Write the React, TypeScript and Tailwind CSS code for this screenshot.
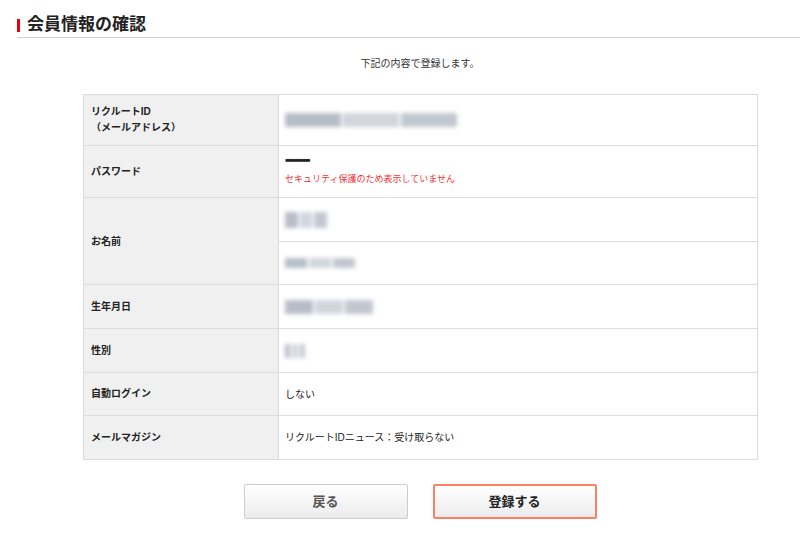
const font = { fontFamily: '"Liberation Sans", "Noto Sans CJK JP", sans-serif' };

function Blur({ w, h = 14 }: { w: number; h?: number }) {
  return (
    <div className="flex gap-[2px] blur-[2px]" style={{ width: w }}>
      <div className="bg-gray-400/70 flex-1" style={{ height: h }} />
      <div className="bg-gray-300 flex-1" style={{ height: h }} />
      <div className="bg-gray-400/60 flex-1" style={{ height: h }} />
    </div>
  );
}

function Row({ label, children, h }: { label: React.ReactNode; children: React.ReactNode; h: string }) {
  return (
    <div className={`flex border-t border-[#dcdcdc] first:border-t-0 ${h}`}>
      <div className="w-[195px] bg-[#f0f0f0] border-r border-[#dcdcdc] flex items-center px-[7px] font-bold text-[10px] text-[#222] leading-[16px]">
        {label}
      </div>
      <div className="flex-1 flex flex-col justify-center px-[6px] text-[10px] text-[#222]">{children}</div>
    </div>
  );
}

export default function App() {
  return (
    <div className="w-[800px] h-[548px] bg-white" style={font}>
      <div className="pl-[17px] pt-[14px]">
        <div className="flex items-center h-[22px]">
          <div className="w-[3px] h-[13px] bg-[#e60012] mr-[7px]" />
          <h1 className="text-[17px] font-bold text-[#222]">会員情報の確認</h1>
        </div>
        <div className="h-px bg-[#d0d0d0] mt-[1px]" />
      </div>
      <p className="text-center text-[10px] text-[#333] mt-[18px] pl-[40px]">下記の内容で登録します。</p>
      <div className="mx-[83px] mt-[23px] border border-[#dcdcdc] w-[675px]">
        <Row h="h-[50px]" label={<span>リクルートID<br />（メールアドレス）</span>}>
          <Blur w={172} />
        </Row>
        <Row h="h-[52px]" label="パスワード">
          <div className="text-[10px] font-bold leading-[10px] tracking-[-1.5px]">••••••••••••</div>
          <div className="text-[#e33] text-[9px] mt-[7px]">セキュリティ保護のため表示していません</div>
        </Row>
        <div className="flex border-t border-[#dcdcdc] h-[87px]">
          <div className="w-[195px] bg-[#f0f0f0] border-r border-[#dcdcdc] flex items-center px-[7px] font-bold text-[10px] text-[#222]">お名前</div>
          <div className="flex-1 flex flex-col">
            <div className="h-[44px] flex items-center px-[6px] border-b border-[#dcdcdc]"><Blur w={42} h={16} /></div>
            <div className="flex-1 flex items-center px-[6px]"><Blur w={70} h={10} /></div>
          </div>
        </div>
        <Row h="h-[44px]" label="生年月日"><Blur w={88} /></Row>
        <Row h="h-[44px]" label="性別"><Blur w={20} /></Row>
        <Row h="h-[43px]" label="自動ログイン">しない</Row>
        <Row h="h-[44px]" label="メールマガジン">リクルートIDニュース：受け取らない</Row>
      </div>
      <div className="flex justify-center gap-[25px] mt-[24px] pl-[40px]">
        <button className="w-[164px] h-[35px] border border-[#ccc] bg-gradient-to-b from-white to-[#ececec] text-[13px] font-bold text-[#555] rounded-[2px]">戻る</button>
        <button className="w-[164px] h-[35px] border-2 border-[#ff8060] bg-gradient-to-b from-white to-[#ececec] text-[13px] font-bold text-[#222] rounded-[2px]">登録する</button>
      </div>
    </div>
  );
}
